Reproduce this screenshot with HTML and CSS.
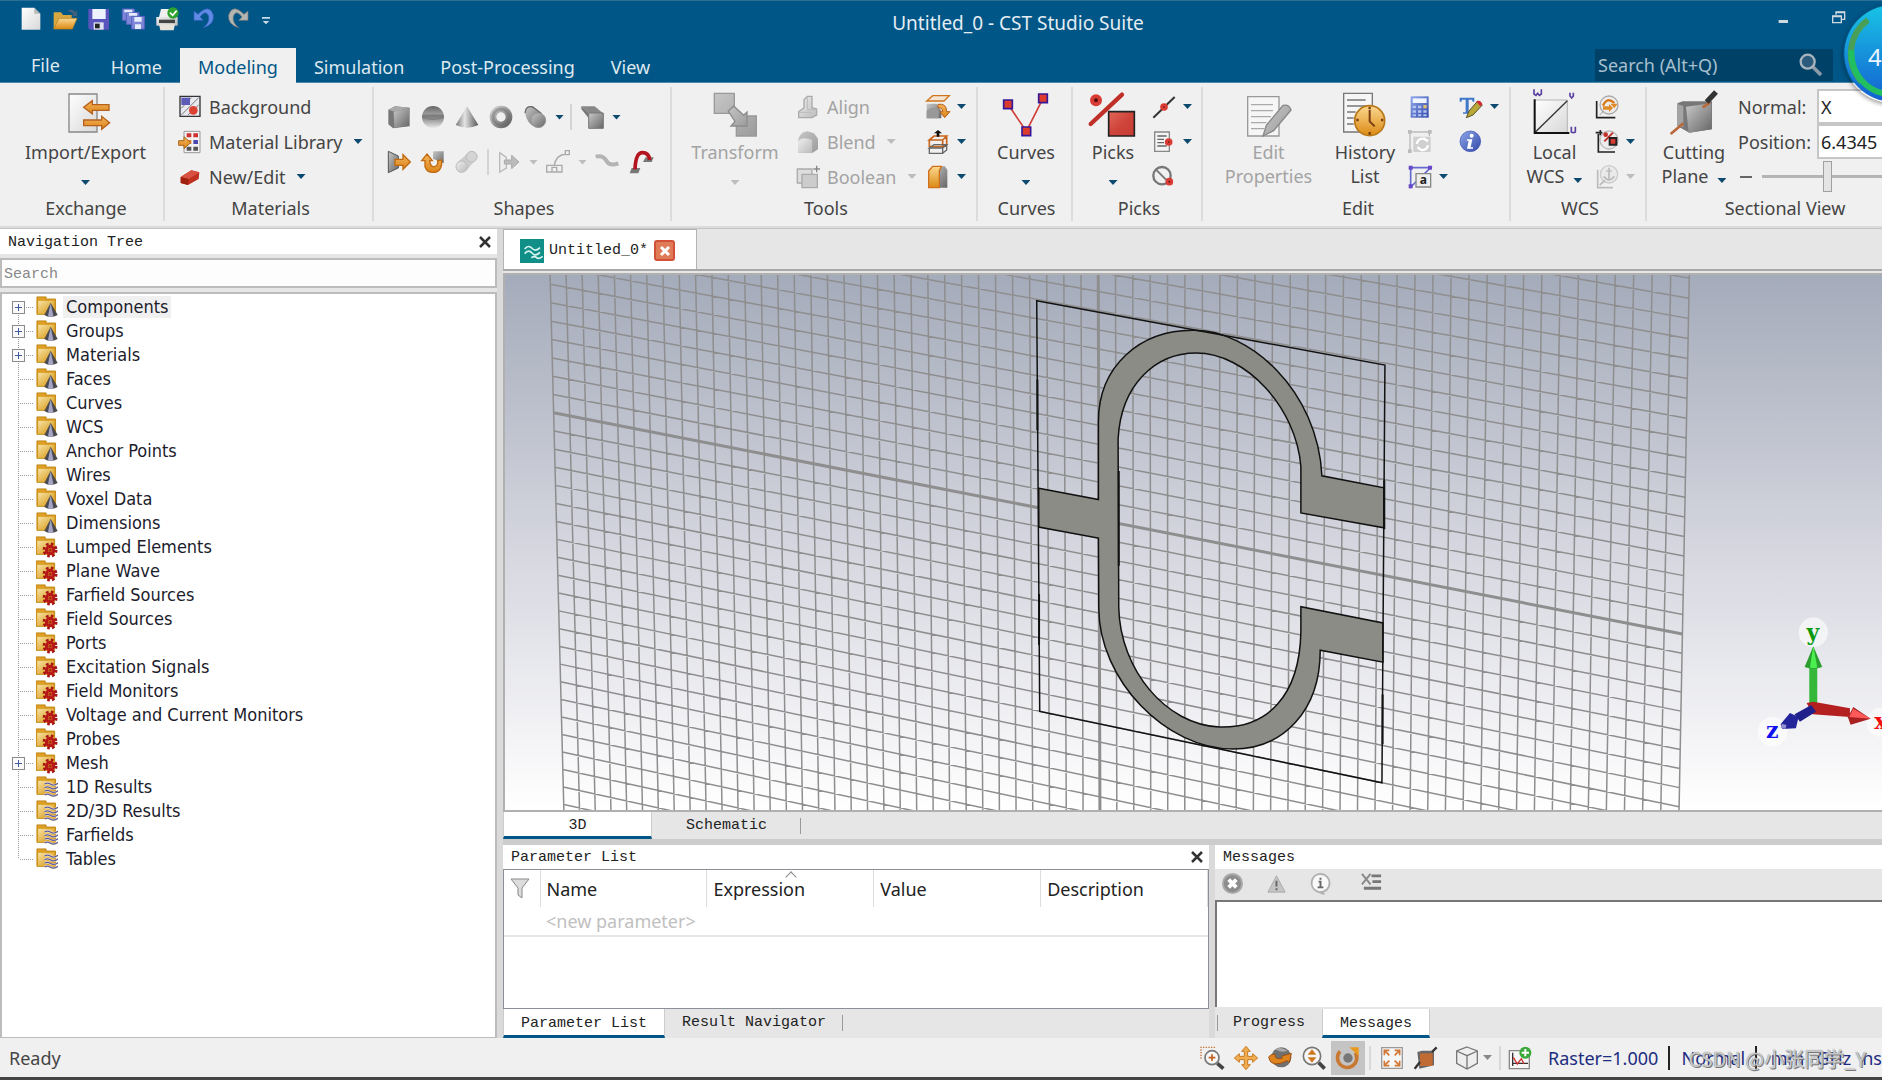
FILE: index.html
```html
<!DOCTYPE html>
<html lang="en">
<head>
<meta charset="utf-8">
<title>Untitled_0 - CST Studio Suite</title>
<link rel="stylesheet" href="styles.css">
</head>
<body>
<svg class="defs" aria-hidden="true">
  <defs>
    <linearGradient id="gray" x1="0" y1="0" x2="1" y2="1"><stop offset="0" stop-color="#c8c8c8"/><stop offset="1" stop-color="#666"/></linearGradient>
    <linearGradient id="steel" x1="0" y1="0" x2="1" y2="0"><stop offset="0" stop-color="#777"/><stop offset=".4" stop-color="#e4e4e4"/><stop offset="1" stop-color="#555"/></linearGradient>
    <linearGradient id="pale" x1="0" y1="0" x2="1" y2="1"><stop offset="0" stop-color="#eee"/><stop offset="1" stop-color="#bbb"/></linearGradient>
    <linearGradient id="mid" x1="0" y1="0" x2="1" y2="1"><stop offset="0" stop-color="#c6c6c6"/><stop offset="1" stop-color="#9c9c9c"/></linearGradient>
    <linearGradient id="gold" x1="0" y1="0" x2="0" y2="1"><stop offset="0" stop-color="#fbd890"/><stop offset="1" stop-color="#dc8a14"/></linearGradient>
    <linearGradient id="arrow" x1="0" y1="0" x2="0" y2="1"><stop offset="0" stop-color="#f4b45c"/><stop offset="1" stop-color="#dc8418"/></linearGradient>
    <linearGradient id="folder" x1="0" y1="0" x2="1" y2="1"><stop offset="0" stop-color="#f5e2a4"/><stop offset="1" stop-color="#d8940c"/></linearGradient>
    <linearGradient id="red" x1="0" y1="0" x2="1" y2="1"><stop offset="0" stop-color="#e2675a"/><stop offset=".5" stop-color="#d0453b"/><stop offset="1" stop-color="#c53a32"/></linearGradient>
    <linearGradient id="blue" x1="0" y1="0" x2="1" y2="1"><stop offset="0" stop-color="#8fa8ea"/><stop offset="1" stop-color="#3048a8"/></linearGradient>
    <linearGradient id="paper" x1="0" y1="0" x2="1" y2="1"><stop offset="0" stop-color="#fff"/><stop offset="1" stop-color="#d8d8d8"/></linearGradient>
    <linearGradient id="ball" x1="0" y1="0" x2="0" y2="1"><stop offset="0" stop-color="#666"/><stop offset=".35" stop-color="#999"/><stop offset=".45" stop-color="#777"/><stop offset="1" stop-color="#e8e8e8"/></linearGradient>
    <symbol id="folder-base" viewBox="0 0 72 72">
      <path d="M3 8V3h30v7h31v50H3z" fill="#dca024" stroke="#c08410" stroke-width="3"/>
      <path d="M7 16h52v42H7z" fill="url(#folder)"/>
    </symbol>
    <symbol id="f-cone" viewBox="0 0 72 72">
      <use href="#folder-base"/>
      <path d="M48 22L27 62q20 12 44 0z" fill="#4a4a50"/><path d="M48 24l-9 42q9 3 18 0z" fill="#a4a6c4"/>
    </symbol>
    <symbol id="f-gear" viewBox="0 0 72 72">
      <use href="#folder-base" x="-3"/>
      <circle cx="46" cy="46" r="20" fill="none" stroke="#a81414" stroke-width="9" stroke-dasharray="8.500 7.208"/>
      <circle cx="46" cy="46" r="12" fill="#e0a52a" stroke="#b81818" stroke-width="10"/><path d="M46 40v12M40 46h12" stroke="#a81414" stroke-width="4"/>
    </symbol>
    <symbol id="f-wave" viewBox="0 0 72 72">
      <use href="#folder-base"/>
      <path d="M28 26q10-6 20 1t24-3M28 38q10-6 20 1t24-3M28 50q10-6 20 1t24-3M28 62q10-6 20 1t24-3" fill="none" stroke="#fff0c4" stroke-width="7"/>
      <path d="M28 26q10-6 20 1t24-3M28 38q10-6 20 1t24-3M28 50q10-6 20 1t24-3M28 62q10-6 20 1t24-3" fill="none" stroke="#5a58a4" stroke-width="4"/>
    </symbol>
  </defs>
</svg>

<header class="titlebar">
  <div class="quick">
    <button aria-label="New"><svg class="ic" viewBox="0 0 72 72"><path d="M8 2h38l18 18v48H8z" fill="url(#paper)"/><path d="M46 2v18h18z" fill="#b8b8b8"/></svg></button>
    <button aria-label="Open"><svg class="ic" viewBox="0 0 72 72"><path d="M2 66V16h22l6 8h26v10H18z" fill="#d8a740"/><path d="M2 66l16-32h54L58 66z" fill="url(#gold)" stroke="#c48a1c" stroke-width="2"/><path d="M42 14q12-14 26 2l4-6v18H56l6-6q-8-10-20-8z" fill="#44607a"/></svg></button>
    <button aria-label="Save"><svg class="ic" viewBox="0 0 72 72"><path d="M4 6h62v62H8l-4-6z" fill="#5a55bd"/><path d="M16 6h40v30H16z" fill="#eef2fc"/><path d="M20 46h30v22H20z" fill="#dfe2ee"/><path d="M24 50h14v14H24z" fill="#222"/></svg></button>
    <button aria-label="Save all"><svg class="ic" viewBox="0 0 72 72"><g stroke="#5a62c0" stroke-width="3" fill="#7e86d8"><path d="M4 6h36v34H4z"/><path d="M16 16h38v36H16z"/><path d="M32 28h38v38H32z"/></g><path d="M10 8h24v8H10zM24 18h24v8H24zM40 30h22v14H40zM42 52h18v14H42z" fill="#e4ebfa"/></svg></button>
    <button aria-label="Print"><svg class="ic" viewBox="0 0 72 72"><path d="M18 6h36v24H12z" fill="#f0f0f0"/><path d="M4 30h64v26H4z" fill="url(#pale)"/><path d="M12 38h48v10H12z" fill="#444"/><path d="M12 52h48l-4 18H16z" fill="#e8e4dc"/><circle cx="54" cy="18" r="17" fill="#2fa32f"/><path d="M45 17l8 8 12-14" fill="none" stroke="#fff" stroke-width="5"/></svg></button>
    <button class="undo" aria-label="Undo"><svg class="ic" viewBox="0 0 72 72"><path d="M6 12v28h28L24 30Q42 6 50 28q4 20-16 34 34-10 30-38Q52-12 18 22z" fill="#5f8ae6" stroke="#3561bd" stroke-width="2"/></svg></button>
    <button aria-label="Redo"><svg class="ic" viewBox="0 0 72 72"><path d="M66 12v28H38l10-10Q30 6 22 28q-4 20 16 34Q4 52 8 24 20-12 54 22z" fill="#b4b4b0" stroke="#777" stroke-width="2"/></svg></button>
    <button aria-label="Customize"><svg class="ic" viewBox="0 0 72 72"><path d="M6 30h24v5H6zM8 42h20L18 52z" fill="#c8dce8"/></svg></button>
  </div>
  <h1>Untitled_0 - CST Studio Suite</h1>
  <div class="wincontrols">
    <button aria-label="Minimize"><svg class="ic" viewBox="0 0 72 72"><path d="M20 30h28v9H20z" fill="#d0d8e0"/></svg></button>
    <button aria-label="Restore"><svg class="ic" viewBox="0 0 72 72"><path d="M30 14V6h26v22h-8M20 18h26v20H20z" fill="none" stroke="#d0d8e0" stroke-width="4"/><path d="M20 17h26v5H20zM30 5h26v5H30z" fill="#d0d8e0"/></svg></button>
  </div>
</header>
<nav class="tabs">
  <a class="file" href="#file">File</a><a href="#home">Home</a><a class="on" href="#modeling">Modeling</a><a href="#sim">Simulation</a><a href="#post">Post-Processing</a><a href="#view">View</a>
  <label class="find"><input type="text" placeholder="Search (Alt+Q)" aria-label="Search commands"><svg class="ic" viewBox="0 0 72 72"><path d="M42 42l24 24" stroke="#8a9aa8" stroke-width="11"/><circle cx="26" cy="26" r="21" fill="#2c5a7c" stroke="#a8b4be" stroke-width="7"/></svg></label>
</nav>
<div class="badge" aria-hidden="true"><svg viewBox="0 0 150 150"><defs><linearGradient id="bd" x1="0" y1="0" x2="0" y2="1"><stop offset="0" stop-color="#18c4e6"/><stop offset="1" stop-color="#1460d0"/></linearGradient></defs><circle cx="75" cy="75" r="73" fill="url(#bd)"/><path d="M38 24A64 64 0 0 0 28 118" fill="none" stroke="#4a9f58" stroke-width="9"/><path d="M13 70A62 62 0 0 0 90 135" fill="none" stroke="#22bf60" stroke-width="9"/></svg><span>4</span></div>

<section class="ribbon">
  <div class="group exchange">
    <div class="body">
      <button class="big"><svg class="lg" viewBox="-12 0 144 132"><path d="M12 6h84v114H12z" fill="url(#paper)" stroke="#888" stroke-width="4"/><path d="M56 46l26-20v12h50v17H82v11z" fill="url(#arrow)" stroke="#b5601c" stroke-width="4"/><path d="M134 92l-24-19v11H56v17h54v11z" fill="url(#arrow)" stroke="#b5601c" stroke-width="4"/></svg><span>Import/Export</span><i class="dd"></i></button>
    </div><h2>Exchange</h2>
  </div>
  <div class="group materials">
    <div class="body"><div class="rows">
      <button class="sm"><svg class="ic" viewBox="0 0 72 72"><path d="M6 4h60v60H6z" fill="#e8e8f0" stroke="#333" stroke-width="4"/><path d="M10 60L62 8M30 60L62 30M10 40L40 8" stroke="#777" stroke-width="3"/><path d="M10 8h26v22H10z" fill="#5c5cb8"/><circle cx="46" cy="46" r="13" fill="#dc4030"/></svg>Background</button>
      <button class="sm"><svg class="ic" viewBox="0 0 72 72"><path d="M18 4h48v64H18z" fill="#f2f2f2" stroke="#999" stroke-width="3"/><path d="M26 10h14v12H26zM46 10h14v12H46z" fill="#d03030"/><path d="M26 30h14v12H26z" fill="#e08020"/><path d="M46 30h14v12H46z" fill="#4848b0"/><path d="M26 50h14v12H26zM46 50h14v12H46z" fill="#555"/><path d="M2 32h16V20l20 18-20 18V46H2z" fill="url(#arrow)" stroke="#a8681c" stroke-width="3"/></svg>Material Library<i class="dd"></i></button>
      <button class="sm"><svg class="ic" viewBox="0 0 72 72"><path d="M8 36L40 16l24 6-2 20-32 18-22-6z" fill="#c03020"/><path d="M8 36L40 16l24 6-32 20z" fill="#d85040"/><path d="M32 42l-2 18-22-6V36z" fill="#a02010"/></svg>New/Edit<i class="dd"></i></button>
    </div></div><h2>Materials</h2>
  </div>
  <div class="group shapes">
    <div class="body"><div class="strips">
      <div class="strip">
        <button aria-label="Brick"><svg class="ic" viewBox="0 0 72 72"><path d="M4 14L24 4l44 4v56L18 70 4 58z" fill="#777"/><path d="M20 20l46-10v52l-44 6z" fill="url(#gray)"/><path d="M4 14L24 4l44 4-46 12z" fill="#aaa"/></svg></button>
        <button aria-label="Sphere"><svg class="ic" viewBox="0 0 72 72"><circle cx="36" cy="36" r="33" fill="url(#ball)"/><path d="M4 36q32 14 64 0" fill="none" stroke="#777" stroke-width="3"/></svg></button>
        <button aria-label="Cone"><svg class="ic" viewBox="0 0 72 72"><path d="M36 4L2 60q34 16 68 0z" fill="url(#steel)"/></svg></button>
        <button aria-label="Torus"><svg class="ic" viewBox="0 0 72 72"><circle cx="36" cy="36" r="24" fill="none" stroke="url(#gray)" stroke-width="20"/><circle cx="36" cy="36" r="24" fill="none" stroke="#666" stroke-opacity=".4" stroke-width="8"/></svg></button>
        <button aria-label="Cylinder"><svg class="ic" viewBox="0 0 72 72"><path d="M6 24Q8 0 30 6l26 20-20 40Q12 56 6 24z" fill="url(#gray)"/><path d="M6 24Q8 0 30 6l26 20" fill="none" stroke="#666" stroke-width="4"/><circle cx="46" cy="46" r="22" fill="url(#gray)" stroke="#999" stroke-width="3"/></svg></button>
        <i class="dd"></i><i class="bar"></i>
        <button aria-label="Face extrude"><svg class="ic" viewBox="0 0 72 72"><path d="M4 4h40l24 20H26z" fill="#888"/><path d="M4 4l22 20v16L4 12z" fill="#777"/><path d="M26 24h44v46H26z" fill="url(#gray)" stroke="#777" stroke-width="3"/></svg></button>
        <i class="dd"></i>
      </div>
      <div class="strip">
        <button aria-label="Extrude"><svg class="ic" viewBox="0 0 72 72"><path d="M4 4l30 14v36L4 68z" fill="url(#gray)" stroke="#555" stroke-width="3"/><path d="M24 28h24V14l22 22-22 22V46H24z" fill="url(#arrow)" stroke="#c06a10" stroke-width="4"/></svg></button>
        <button aria-label="Rotate"><svg class="ic" viewBox="0 0 72 72"><path d="M36 4h32v36L36 26z" fill="url(#gray)"/><path d="M2 32L18 12l16 20h-8q2 20 14 18 12-2 10-18l12-2q2 30-16 36-26 6-34-16V32z" fill="url(#arrow)" stroke="#c06a10" stroke-width="4"/></svg></button>
        <button aria-label="Loft" disabled><svg class="ic" viewBox="0 0 72 72"><path d="M6 38L42 6q22-6 26 16L34 62z" fill="#ccc"/><circle cx="20" cy="50" r="17" fill="url(#pale)" stroke="#bbb" stroke-width="3"/><circle cx="50" cy="20" r="16" fill="#d4d4d4" stroke="#bbb" stroke-width="3"/></svg></button>
        <i class="bar"></i>
        <button aria-label="Shell" disabled><svg class="ic" viewBox="0 0 72 72"><path d="M8 8l20 14v32L8 66z" fill="#eee" stroke="#bbb" stroke-width="4"/><path d="M22 30h22V16l22 20-22 20V42H22z" fill="#bbb" stroke="#aaa" stroke-width="3"/></svg></button>
        <i class="dd off"></i>
        <button aria-label="Bend" disabled><svg class="ic" viewBox="0 0 72 72"><path d="M2 46h46v20H2zM18 52h14v14H18zM24 48Q30 14 60 12M58 2h12v12H58z" fill="none" stroke="#aaa" stroke-width="4"/></svg></button>
        <i class="dd off"></i>
        <button aria-label="Sweep" disabled><svg class="ic" viewBox="0 0 72 72"><path d="M2 20q22-6 32 12t36 8" fill="none" stroke="#b4b4b4" stroke-width="12"/></svg></button>
        <button aria-label="Bond wire"><svg class="ic" viewBox="0 0 72 72"><path d="M8 54h26l-6 16H2zM50 22h24l-6 14H42z" fill="#777"/><path d="M18 58Q20 8 40 8t22 22" fill="none" stroke="#b41420" stroke-width="11"/></svg></button>
      </div>
    </div></div><h2>Shapes</h2>
  </div>
  <div class="group tools">
    <div class="body">
      <button class="big" disabled><svg class="lg" viewBox="0 0 144 132"><path d="M10 4h60v60H10zM76 72h60v60H76z" fill="url(#mid)" stroke="#999" stroke-width="4"/><path d="M52 58l16-16 30 28 10-10v42H60l12-14z" fill="url(#mid)" stroke="#8c8c8c" stroke-width="4"/></svg><span>Transform</span><i class="dd off"></i></button>
      <div class="rows">
        <button class="sm" disabled><svg class="ic" viewBox="0 0 72 72"><path d="M8 50l16-12V14L34 4h14v34l14 4v18l-14 8H8z" fill="url(#pale)" stroke="#aaa" stroke-width="4"/><path d="M34 4v40h28M8 52h40" fill="none" stroke="#bbb" stroke-width="3"/></svg>Align</button>
        <button class="sm" disabled><svg class="ic" viewBox="0 0 72 72"><path d="M6 34Q8 8 34 4l20 6 12 16v32L50 68H6z" fill="url(#mid)"/><path d="M6 34Q20 18 48 30v38H6z" fill="url(#pale)"/></svg>Blend<i class="dd off"></i></button>
        <button class="sm" disabled><svg class="ic" viewBox="0 0 72 72"><path d="M4 12h44v42H4z" fill="#ddd" stroke="#aaa" stroke-width="4"/><path d="M18 28h46v40H18z" fill="#ccc" stroke="#aaa" stroke-width="4"/><path d="M52 12h20M62 2v20" stroke="#888" stroke-width="4"/></svg>Boolean<i class="dd off"></i></button>
      </div>
      <div class="rows icons">
        <button class="sm" aria-label="Bend shape"><svg class="ic" viewBox="0 0 72 72"><path d="M20 2h50L54 18H2z" fill="#f4e4d4" stroke="#d0741c" stroke-width="4"/><path d="M2 26h30l14 22v22H2z" fill="url(#gray)"/><path d="M2 48q18-20 36 0v22H2z" fill="#999"/><path d="M36 28q26-4 26 22h10L56 68 42 50h8q0-12-14-12z" fill="url(#arrow)" stroke="#b5601c" stroke-width="3"/></svg><i class="dd"></i></button>
        <button class="sm" aria-label="Shape tools"><svg class="ic" viewBox="0 0 72 72"><path d="M10 30l14-12h38L50 30zM10 30v20h40V30M62 18v26L50 50" fill="none" stroke="#c8641c" stroke-width="5"/><path d="M10 54l14-10h38L50 54zM10 54v16h40V54M62 44v16L50 70" fill="none" stroke="#666" stroke-width="4"/><path d="M36 0L24 10h8v10h8V10h8z" fill="#111"/></svg><i class="dd"></i></button>
        <button class="sm" aria-label="Slice"><svg class="ic" viewBox="0 0 72 72"><path d="M8 14L20 4h36l8 10v54H8z" fill="url(#gray)"/><path d="M8 18L20 4h26L40 18v50H8z" fill="url(#gold)" stroke="#d0701c" stroke-width="4"/></svg><i class="dd"></i></button>
      </div>
    </div><h2>Tools</h2>
  </div>
  <div class="group curves">
    <div class="body">
      <button class="big"><svg class="lg" viewBox="0 0 144 132"><path d="M18 37L73 118 123 19" fill="none" stroke="#d04038" stroke-width="5"/><path d="M5 24h26v26H5zM60 105h26v26H60zM110 6h26v26h-26z" fill="#dc3c2c" stroke="#35189a" stroke-width="5"/></svg><span>Curves</span><i class="dd"></i></button>
    </div><h2>Curves</h2>
  </div>
  <div class="group picks">
    <div class="body">
      <button class="big"><svg class="lg" viewBox="0 0 144 132"><path d="M5 96L99 8" stroke="#c03028" stroke-width="13" stroke-linecap="round"/><circle cx="21" cy="25" r="12" fill="#501010" stroke="#d83c34" stroke-width="12"/><path d="M59 59h77v73H59z" fill="url(#red)" stroke="#222" stroke-width="5"/></svg><span>Picks</span><i class="dd"></i></button>
      <div class="rows icons">
        <button class="sm" aria-label="Pick point"><svg class="ic" viewBox="0 0 72 72"><path d="M4 68L68 6" stroke="#333" stroke-width="6"/><circle cx="36" cy="36" r="7" fill="#601010" stroke="#d83c34" stroke-width="9"/></svg><i class="dd"></i></button>
        <button class="sm" aria-label="Pick lists"><svg class="ic" viewBox="0 0 72 72"><path d="M8 6h44v58H8z" fill="#f4f4f4" stroke="#888" stroke-width="4"/><path d="M16 18h28M16 28h20M16 38h20M16 48h28" stroke="#666" stroke-width="4"/><circle cx="50" cy="36" r="7" fill="#601010" stroke="#d83c34" stroke-width="9"/></svg><i class="dd"></i></button>
        <button class="sm" aria-label="Clear picks"><svg class="ic" viewBox="0 0 72 72"><circle cx="30" cy="32" r="26" fill="#f0f0f0" stroke="#777" stroke-width="7"/><path d="M12 14l36 36" stroke="#777" stroke-width="6"/><circle cx="52" cy="50" r="7" fill="#601010" stroke="#d83c34" stroke-width="9"/></svg></button>
      </div>
    </div><h2>Picks</h2>
  </div>
  <div class="group edit">
    <div class="body">
      <button class="big props" disabled><svg class="lg" viewBox="0 0 144 132"><path d="M8 14h94v118H8z" fill="#f6f6f6" stroke="#999" stroke-width="4"/><path d="M18 38h66M18 56h66M18 74h60M18 92h46M18 110h40" stroke="#aaa" stroke-width="4"/><path d="M54 132l10-32 50-60q18-4 24 14L86 116z" fill="url(#mid)" stroke="#888" stroke-width="4"/></svg><span>Edit<br>Properties</span></button>
      <button class="big"><svg class="lg" viewBox="0 0 144 132"><path d="M8 4h86v116H8z" fill="#f6f6f6" stroke="#777" stroke-width="4"/><path d="M18 24h56M18 42h60M18 60h26M18 78h20M18 96h20" stroke="#777" stroke-width="4"/><circle cx="86" cy="86" r="45" fill="url(#gold)" stroke="#b87818" stroke-width="5"/><path d="M86 54v34l15 15" fill="none" stroke="#7a3c10" stroke-width="6"/><path d="M86 44v8M86 120v8M46 84h7M120 84h7" stroke="#7a3c10" stroke-width="7"/></svg><span>History<br>List</span></button>
      <div class="rows icons">
        <button class="sm" aria-label="Calculator"><svg class="ic" viewBox="0 0 72 72"><path d="M8 4h54v64H8z" fill="url(#blue)"/><path d="M14 10h42v14H14z" fill="#f0f4ff"/><path d="M14 32h10v8H14zM30 32h10v8H30zM14 46h10v7H14zM30 46h10v7H30zM46 46h10v7H46zM14 58h10v6H14zM30 58h10v6H30zM46 58h10v6H46z" fill="#b4c2f4"/><path d="M46 30h10v10H46z" fill="#e0c070"/></svg></button>
        <button class="sm" aria-label="Update" disabled><svg class="ic" viewBox="0 0 72 72"><path d="M6 6h60M6 6v60M64 6v12" fill="none" stroke="#bbb" stroke-width="4"/><path d="M0 0h11v11H0zM60 0h11v11H60zM0 58h11v11H0z" fill="#bbb"/><path d="M16 20h52v46H16z" fill="#d0d0d0"/><path d="M26 42q4-18 22-16l12 8M60 46q-4 16-20 14l-12-8" fill="none" stroke="#fff" stroke-width="7"/></svg></button>
        <button class="sm" aria-label="Rename"><svg class="ic" viewBox="0 0 72 72"><path d="M8 8h60L8 66z" fill="none" stroke="#666ad0" stroke-width="5"/><path d="M2 2h12v12H2zM60 2h12v12H60zM2 58h12v12H2z" fill="#6648c8"/><path d="M24 26h44v40H24z" fill="#eee" stroke="#888" stroke-width="4"/><text x="35" y="58" class="glyph-a">a</text></svg><i class="dd"></i></button>
      </div>
      <div class="rows icons">
        <button class="sm" aria-label="Text edit"><svg class="ic" viewBox="0 0 72 72"><path d="M2 20V8h44v12h-5l-2-6H29v38h8v4H12v-4h8V14H9l-2 6z" fill="#3f78c8"/><path d="M22 68l8-20 26-30 14 12-28 30z" fill="#b8a83a" stroke="#5a5228" stroke-width="3"/><path d="M52 20q12-8 18 8l-6 6z" fill="#d02838"/></svg><i class="dd"></i></button>
        <button class="sm" aria-label="Information"><svg class="ic" viewBox="0 0 72 72"><circle cx="34" cy="34" r="31" fill="url(#blue)" stroke="#3a4fb0" stroke-width="2"/><circle cx="38" cy="17" r="6" fill="#fff"/><path d="M24 28h16l-5 24h7v4H24l5-24h-6z" fill="#fff"/></svg></button>
      </div>
    </div><h2>Edit</h2>
  </div>
  <div class="group wcs">
    <div class="body">
      <button class="big"><svg class="lg" viewBox="5 0 144 132"><path d="M16 24h98v98H16z" fill="url(#paper)" stroke="#999" stroke-width="2"/><path d="M16 122L114 26" stroke="#333" stroke-width="4"/><path d="M16 22v101h104" fill="none" stroke="#111" stroke-width="6"/><path d="M14-8v14l6 4 5-6 5 6 6-4V-8M122 2v10l5 6 5-6V2M126 104v16q6 4 12 0v-16" fill="none" stroke="#5a40a0" stroke-width="5"/></svg><span>Local<br>WCS<i class="dd"></i></span></button>
      <div class="rows icons">
        <button class="sm" aria-label="Rotate WCS"><svg class="ic" viewBox="0 0 72 72"><circle cx="42" cy="30" r="27" fill="#ececec" stroke="#aaa" stroke-width="4"/><path d="M5 18v50h56" fill="none" stroke="#222" stroke-width="5"/><path d="M14 60l12-12" stroke="#999" stroke-width="3"/><path d="M24 32q12-28 34-8" fill="none" stroke="#d87818" stroke-width="7"/><path d="M46 26h22L58 40zM24 34h18v-7l12 12-12 12v-7H24z" fill="#e08a28"/></svg></button>
        <button class="sm" aria-label="Align WCS"><svg class="ic" viewBox="0 0 72 72"><circle cx="42" cy="30" r="27" fill="#ececec" stroke="#bbb" stroke-width="4"/><path d="M10 12v54h50M2 8h20M16 0v16" fill="none" stroke="#222" stroke-width="5"/><path d="M28 34L54 8" stroke="#c03028" stroke-width="6"/><circle cx="32" cy="14" r="7" fill="#c03028"/><path d="M44 24h20v20H44z" fill="#d83c34" stroke="#222" stroke-width="6"/></svg><i class="dd"></i></button>
        <button class="sm" aria-label="Fix WCS" disabled><svg class="ic" viewBox="0 0 72 72"><circle cx="42" cy="28" r="26" fill="#eaeaea" stroke="#ccc" stroke-width="4"/><path d="M8 14v54h46M14 60l16-14" fill="none" stroke="#bbb" stroke-width="5"/><path d="M42 8v38M26 34q16 22 32 0M34 18h16" fill="none" stroke="#bbb" stroke-width="5"/></svg><i class="dd off"></i></button>
      </div>
    </div><h2>WCS</h2>
  </div>
  <div class="group section">
    <div class="body">
      <button class="big"><svg class="lg" viewBox="0 0 144 132"><path d="M22 34l16-6h88v84l-68 10-36-20z" fill="#777"/><path d="M22 36l18 6v64l-18-6z" fill="#a4a4a4"/><path d="M48 44l76-10v78l-68 10z" fill="url(#gray)"/><path d="M2 126L40 94M98 46l22-14" stroke="#b8683a" stroke-width="8"/><path d="M110 30L138 0" stroke="#333" stroke-width="16"/></svg><span>Cutting<br>Plane<i class="dd"></i></span></button>
      <form class="plane">
        <label for="normal">Normal:</label><select id="normal"><option>X</option></select>
        <label for="pos">Position:</label><input id="pos" type="text" value="6.4345">
        <div class="slide"><span class="minus"></span><input type="range" min="0" max="100" value="38" aria-label="Plane position"></div>
      </form>
    </div><h2>Sectional View</h2>
  </div>
</section>

<main class="work">
  <aside class="navtree">
    <div class="dockhead"><h3>Navigation Tree</h3><button aria-label="Close navigation tree"><svg class="x" viewBox="0 0 12 12"><path d="M1 1l10 10M11 1L1 11"/></svg></button></div>
    <input class="treesearch" type="text" placeholder="Search" aria-label="Search tree">
    <ul class="tree">
      <li><span class="tw"><b class="plus"></b></span><svg class="ic"><use href="#f-cone"/></svg><a class="sel" href="#t">Components</a></li>
      <li><span class="tw"><b class="plus"></b></span><svg class="ic"><use href="#f-cone"/></svg><a href="#t">Groups</a></li>
      <li><span class="tw"><b class="plus"></b></span><svg class="ic"><use href="#f-cone"/></svg><a href="#t">Materials</a></li>
      <li><span class="tw"></span><svg class="ic"><use href="#f-cone"/></svg><a href="#t">Faces</a></li>
      <li><span class="tw"></span><svg class="ic"><use href="#f-cone"/></svg><a href="#t">Curves</a></li>
      <li><span class="tw"></span><svg class="ic"><use href="#f-cone"/></svg><a href="#t">WCS</a></li>
      <li><span class="tw"></span><svg class="ic"><use href="#f-cone"/></svg><a href="#t">Anchor Points</a></li>
      <li><span class="tw"></span><svg class="ic"><use href="#f-cone"/></svg><a href="#t">Wires</a></li>
      <li><span class="tw"></span><svg class="ic"><use href="#f-cone"/></svg><a href="#t">Voxel Data</a></li>
      <li><span class="tw"></span><svg class="ic"><use href="#f-cone"/></svg><a href="#t">Dimensions</a></li>
      <li><span class="tw"></span><svg class="ic"><use href="#f-gear"/></svg><a href="#t">Lumped Elements</a></li>
      <li><span class="tw"></span><svg class="ic"><use href="#f-gear"/></svg><a href="#t">Plane Wave</a></li>
      <li><span class="tw"></span><svg class="ic"><use href="#f-gear"/></svg><a href="#t">Farfield Sources</a></li>
      <li><span class="tw"></span><svg class="ic"><use href="#f-gear"/></svg><a href="#t">Field Sources</a></li>
      <li><span class="tw"></span><svg class="ic"><use href="#f-gear"/></svg><a href="#t">Ports</a></li>
      <li><span class="tw"></span><svg class="ic"><use href="#f-gear"/></svg><a href="#t">Excitation Signals</a></li>
      <li><span class="tw"></span><svg class="ic"><use href="#f-gear"/></svg><a href="#t">Field Monitors</a></li>
      <li><span class="tw"></span><svg class="ic"><use href="#f-gear"/></svg><a href="#t">Voltage and Current Monitors</a></li>
      <li><span class="tw"></span><svg class="ic"><use href="#f-gear"/></svg><a href="#t">Probes</a></li>
      <li><span class="tw"><b class="plus"></b></span><svg class="ic"><use href="#f-gear"/></svg><a href="#t">Mesh</a></li>
      <li><span class="tw"></span><svg class="ic"><use href="#f-wave"/></svg><a href="#t">1D Results</a></li>
      <li><span class="tw"></span><svg class="ic"><use href="#f-wave"/></svg><a href="#t">2D/3D Results</a></li>
      <li><span class="tw"></span><svg class="ic"><use href="#f-wave"/></svg><a href="#t">Farfields</a></li>
      <li><span class="tw"></span><svg class="ic"><use href="#f-wave"/></svg><a href="#t">Tables</a></li>
    </ul>
  </aside>

  <div class="center">
    <div class="doctabs"><div class="doctab"><svg class="ic" viewBox="0 0 72 72"><path d="M0 0h72v72H0z" fill="#0f8f88"/><path d="M14 30q12-14 22-2t24-2M14 44q12-14 22-2t24-2M34 56q10-6 16 0t18-4" fill="none" stroke="#d8f4f0" stroke-width="5"/></svg><span>Untitled_0*</span><button aria-label="Close document"><svg class="x" viewBox="0 0 12 12"><path d="M2 2l8 8M10 2L2 10"/></svg></button></div></div>
    <div class="viewport">
      <svg id="scene" viewBox="506 275 1376 535" preserveAspectRatio="xMinYMin slice" role="img" aria-label="3D model view">
        <path id="grid" class="grid"/>
        <path id="axes" class="axes"/>
        <g transform="translate(1000 270) scale(.3333 .3444)" class="model">
          <path class="solid" d="M118 633L297 666V440C297 280 420 175 580 175C750 172 955 350 967 597L1153 632V748L904 705V570C890 400 740 241 590 241C470 241 365 330 356 490L358 980C362 1160 500 1320 660 1326C800 1330 900 1240 904 1050V977L1150 1024V1138L962 1103C962 1280 850 1390 700 1390C500 1390 298 1190 298 980L297 778 118 746z"/>
          <path class="box" d="M112 89L1156 276 1147 1488 121 1281z"/>
          <path class="heavy" d="M114 318V465M358 583V858M1154 610V752M119 940V1088M1149 1232V1376"/>
        </g>
        <g transform="translate(1640 580) scale(.3333)">
          <circle cx="520" cy="156" r="44" class="halo"/><circle cx="398" cy="454" r="44" class="halo"/><circle cx="724" cy="426" r="44" class="halo"/>
          <path d="M508 255h24v115h-24z" fill="#35b83a"/><path d="M520 198L494 260q26 10 53 0z" fill="#2c9e30"/><path d="M520 198l-10 64q10 3 22 0z" fill="#4af050"/>
          <path d="M500 368l20-4 110 20v26l-112-8z" fill="#b42020"/><path d="M640 380l52 35-60 18-8-22z" fill="#a82020"/><path d="M640 385l52 30-64-5z" fill="#ff5a5a"/>
          <path d="M514 374l14 20-48 30-16-22z" fill="#20208a"/><path d="M450 398l26 12-8 34-40 2-6-14z" fill="#24249a"/><path d="M426 430l14 4-4 12-14-4z" fill="#9090d0"/>
          <text x="500" y="180" class="axis ay">y</text><text x="378" y="474" class="axis az">z</text><text x="703" y="447" class="axis ax">x</text>
        </g>
      </svg>
    </div>
    <div class="viewtabs strip-tabs"><button class="on">3D</button><button>Schematic</button></div>

    <div class="docks">
      <section class="params">
        <div class="dockhead"><h3>Parameter List</h3><button aria-label="Close parameter list"><svg class="x" viewBox="0 0 12 12"><path d="M1 1l10 10M11 1L1 11"/></svg></button></div>
        <div class="tablebox">
          <table>
            <thead><tr><th class="filter"><svg viewBox="0 0 20 22"><path d="M1 1h18l-7 9v10l-4-3v-7z" fill="#ddd" stroke="#888"/></svg></th><th>Name</th><th class="sorted">Expression</th><th>Value</th><th>Description</th></tr></thead>
            <tbody><tr><td></td><td colspan="4">&lt;new parameter&gt;</td></tr></tbody>
          </table>
        </div>
        <div class="strip-tabs"><button class="on">Parameter List</button><button>Result Navigator</button></div>
      </section>
      <section class="messages">
        <div class="dockhead"><h3>Messages</h3></div>
        <div class="msgbar">
          <button aria-label="Errors"><svg viewBox="0 0 24 24"><circle cx="12" cy="12" r="10" fill="#8c8c8c" stroke="#aaa" stroke-width="2"/><path d="M8 8l8 8M16 8l-8 8" stroke="#fff" stroke-width="4"/></svg></button>
          <button aria-label="Warnings"><svg viewBox="0 0 24 24"><path d="M12 4L3 21h18z" fill="#c4c4c4" stroke="#aaa"/><path d="M12 9v6M12 17v2" stroke="#666" stroke-width="2"/></svg></button>
          <button aria-label="Information messages"><svg viewBox="0 0 24 24"><path d="M12 2a9.500 9.500 0 1 1 0 19l4 2-8-3A9.500 9.500 0 0 1 12 2z" fill="#f8f8f8" stroke="#b0b0b0" stroke-width="2"/><path d="M12 6v2M10 10h2v6M9 16h6" fill="none" stroke="#666" stroke-width="2"/></svg></button>
          <button class="clear" aria-label="Clear messages"><svg viewBox="0 0 24 24"><path d="M12 4h10M13 10h9M4 17h18" stroke="#777" stroke-width="3"/><path d="M2 2l9 11M11 2L2 13" stroke="#888" stroke-width="2"/></svg></button>
        </div>
        <div class="msgbox"></div>
        <div class="strip-tabs right"><button>Progress</button><button class="on">Messages</button></div>
      </section>
    </div>
  </div>
</main>

<footer class="status">
  <span class="ready">Ready</span>
  <div class="statusicons">
    <button aria-label="Zoom window"><svg class="ic" viewBox="0 0 72 72"><path d="M3 38V4h42" fill="none" stroke="#c87038" stroke-width="4" stroke-dasharray="4 4"/><path d="M52 52l18 16" stroke="#444" stroke-width="11"/><circle cx="36" cy="35" r="21" fill="#f6f6f6" stroke="#777" stroke-width="5"/><path d="M36 25v20M26 35h20" stroke="#c06020" stroke-width="5"/></svg></button>
    <button aria-label="Pan"><svg class="ic" viewBox="0 0 72 72"><path d="M36 1l13 15h-8v15h15v-8l15 13-15 13v-8H41v15h8L36 71 23 56h8V41H16v8L1 36l15-13v8h15V16h-8z" fill="#f0ac50" stroke="#c87a20" stroke-width="3"/></svg></button>
    <button aria-label="Rotate view"><svg class="ic" viewBox="0 0 72 72"><circle cx="40" cy="34" r="30" fill="#707070"/><path d="M22 10q16-10 36 4-18 8-36-4z" fill="#aaa"/><path d="M2 34q6-12 20-8-4 14 20 12v-8l28-8-6 28-6-6Q8 68 2 34z" fill="#dd8420" stroke="#a05010" stroke-width="3"/></svg></button>
    <button aria-label="Zoom"><svg class="ic" viewBox="0 0 72 72"><path d="M50 50l18 18" stroke="#444" stroke-width="11"/><circle cx="30" cy="30" r="26" fill="#f6f6f6" stroke="#777" stroke-width="5"/><path d="M30 10l13 16H17zM17 34h26L30 50z" fill="#d07820"/></svg></button>
    <button class="active" aria-label="Spin"><svg class="ic" viewBox="0 0 72 72"><circle cx="36" cy="36" r="14" fill="#777"/><path d="M12 16a29 29 0 1 0 46 4" fill="none" stroke="#c87830" stroke-width="11"/><path d="M40 4h28v26z" fill="#e89a20"/></svg></button>
    <i class="vsep"></i>
    <button aria-label="Fit"><svg class="ic" viewBox="0 0 72 72"><path d="M5 5h62v62H5z" fill="#f6f6f6" stroke="#999" stroke-width="4"/><path d="M13 28V13h15M44 13h15v15M59 44v15H44M28 59H13V44M13 13l15 15M59 13L44 28M59 59L44 44M13 59l15-15" fill="none" stroke="#d07838" stroke-width="5"/></svg></button>
    <button aria-label="Cutting plane"><svg class="ic" viewBox="0 0 72 72"><path d="M10 18l14-4h36v44l-44 10z" fill="#666"/><path d="M18 22h38v38H18z" fill="#c06a34"/><path d="M2 68l16-20M54 18L68 4" stroke="#333" stroke-width="7"/></svg></button>
    <button class="cube" aria-label="View cube"><svg class="ic" viewBox="0 0 72 72"><path d="M36 3l31 12v37L36 69 5 52V15zM5 15l31 14 31-14M36 29v40" fill="#eee" stroke="#777" stroke-width="4"/></svg><i class="dd gray"></i></button>
    <i class="vsep tight"></i>
    <button aria-label="Add result"><svg class="ic" viewBox="0 0 72 72"><path d="M4 14h60v54H4z" fill="#f6f6f6" stroke="#888" stroke-width="4"/><path d="M14 20v40M14 52h46" stroke="#333" stroke-width="4"/><path d="M16 34l12 20 12-16 8 16" fill="none" stroke="#d03030" stroke-width="4"/><circle cx="52" cy="20" r="18" fill="#3ca83c"/><path d="M52 9v22M41 20h22" stroke="#fff" stroke-width="6"/></svg></button>
  </div>
  <div class="info"><span>Raster=1.000</span><span>Normal</span><span>mm</span><span>GHz</span><span>ns</span></div>
  <div class="mark">CSDN @小张同学_Y</div>
</footer>
<script src="script.js"></script>
</body>
</html>
```
FILE: styles.css
```css
* { box-sizing: border-box; }
html, body { height: 100%; margin: 0; }
body {
  display: flex; flex-direction: column; overflow: hidden; position: relative;
  background: #f0f0f0; color: #444;
  font: 18px/24px "Noto Sans", sans-serif;
}
button { border: 0; padding: 0; margin: 0; background: none; font: inherit; color: inherit; }
h1, h2, h3, ul { margin: 0; padding: 0; font-weight: 400; }
input, select { font: inherit; border-radius: 0; outline: 0; }
a { color: inherit; text-decoration: none; }
.defs { position: absolute; width: 0; height: 0; }
.ic { width: 24px; height: 24px; flex: none; display: block; overflow: visible; }

/* title bar */
.titlebar { display: flex; flex: none; height: 48px; background: #005686; color: #e4edf3; border-top: 1px solid #2c7095; }
.quick { display: flex; align-items: flex-start; gap: 10px; padding: 6px 0 0 19px; width: 280px; flex: none; }
.quick .undo { margin-left: 3px; }
.titlebar h1 { flex: 1; text-align: center; font-size: 19px; line-height: 44px; }
.wincontrols { display: flex; gap: 30px; width: 126px; padding: 9px 0 0 16px; align-items: flex-start; }

.tabs { display: flex; flex: none; height: 35px; background: #005686; color: #dfe9f0; border-bottom: 1px solid #4a88a8; }
.tabs a { padding: 0 18px; line-height: 38px; height: 35px; }
.tabs .file { padding: 0 33px 0 31px; line-height: 34px; }
.tabs .on { background: #f0f0f0; color: #005686; }
.find { display: flex; align-items: center; width: 238px; height: 32px; margin: 1px 49px 0 auto; padding-right: 10px; background: #004267; }
.find input { flex: 1; min-width: 0; background: none; border: 0; padding: 0 3px; color: #a8bfce; }
.find input::placeholder { color: #a8bfce; opacity: 1; }

.badge { position: absolute; right: -60px; top: 4px; width: 99px; height: 99px; z-index: 3; border-radius: 50%; box-shadow: 0 2px 4px #0006; }
.badge svg { width: 100%; height: 100%; display: block; }
.badge span { position: absolute; left: 25px; top: 38px; color: #e8f4ff; font-size: 24px; line-height: 30px; }

/* ribbon */
.ribbon { display: flex; flex: none; height: 145px; padding: 4px 0 5px; overflow: hidden; border-bottom: 2px solid #dcdcdc; }
.group { display: flex; flex-direction: column; flex: none; border-right: 2px solid #dcdcdc; }
.group h2 { font-size: 18px; line-height: 24px; text-align: center; padding-left: 4px; }
.body { display: flex; height: 109px; padding-top: 2px; }
.big { display: flex; flex-direction: column; align-items: center; padding-top: 3px; line-height: 24px; }
.big .lg { width: 48px; height: 44px; margin-bottom: 4px; overflow: visible; }
.big:disabled, .sm:disabled { color: #a3a3a3; }
.rows { display: flex; flex-direction: column; }
.sm { display: flex; align-items: center; height: 35px; gap: 7px; white-space: nowrap; }
.dd { display: inline-block; flex: none; width: 9px; height: 5px; background: #0c4a70; clip-path: polygon(0 0, 100% 0, 50% 100%); }
.dd.off { background: #bdbdbd; }
.dd.gray { background: #888; }
.sm .dd { margin-left: 4px; }
.big > .dd { margin-top: 16px; }
.big span .dd { margin-left: 9px; }

.exchange { width: 165px; padding-left: 8px; }
.exchange .body { justify-content: center; }
.exchange h2 { padding-left: 1px; }
.materials { width: 209px; }
.materials .body { padding-left: 13px; }
.shapes { width: 298px; }
.shapes .body { padding-left: 13px; }
.strips { display: flex; flex-direction: column; gap: 19px; padding-top: 15px; }
.strip { display: flex; align-items: center; gap: 10px; }
.strip .dd { margin: 0 -2px; }
.bar { width: 2px; height: 26px; background: #d4d4d4; margin: 0 -2px; }
.tools { width: 306px; }
.tools .body { padding-left: 2px; }
.tools .big { width: 122px; }
.tools .rows { width: 130px; }
.rows.icons { width: auto; }
.rows.icons .dd { margin-left: 0; }
.curves { width: 95px; }
.curves .body { justify-content: center; padding-left: 3px; }
.picks { width: 130px; }
.picks .body { padding-left: 16px; gap: 15px; }
.edit { width: 308px; }
.edit .body { padding-left: 16px; }
.edit .big { width: 94px; }
.edit .big.props { width: 99px; }
.edit .big + .rows { margin-left: -4px; }
.edit .rows + .rows { margin-left: 11px; }
.edit .rows { width: 40px; }
.wcs { width: 136px; }
.wcs .body { padding-left: 15px; gap: 12px; }
.wcs .big { width: 57px; }
.section { flex: 1; border: 0; }
.section .body { padding-left: 13px; gap: 10px; }
.section .big { width: 68px; }
.section h2 { padding-left: 0; width: 276px; }
.glyph-a { font: bold 36px "Noto Sans", sans-serif; fill: #222; }

.plane { display: grid; grid-template-columns: 79px 1fr; grid-auto-rows: 35px; align-items: center; flex: 1; margin: 0; }
.plane select, .plane input[type=text] { width: 160px; height: 35px; border: 2px solid #c6c6c6; background: #fff; color: #222; padding: 0 2px; appearance: none; }
.slide { grid-column: 1 / 3; display: flex; align-items: center; gap: 10px; }
.minus { width: 12px; height: 2px; background: #666; margin-left: 2px; }
.slide input { appearance: none; width: 170px; height: 31px; margin: 0; background: linear-gradient(#b4b4b4, #b4b4b4) center / 100% 3px no-repeat; }
.slide input::-webkit-slider-thumb { appearance: none; width: 9px; height: 31px; background: #e4e4e4; border: 1px solid #a0a0a0; }

/* work area */
.work { flex: 1; display: grid; grid-template-columns: 497px minmax(0, 1fr); column-gap: 6px; min-height: 0; background: #dadada; border-top: 1px solid #c4c4c4; }
.dockhead { display: flex; align-items: center; justify-content: space-between; height: 24px; flex: none; background: #fff; padding: 0 6px 0 8px; }
.dockhead h3, .strip-tabs, .doctab, .treesearch { font: 15px/24px "Liberation Mono", monospace; color: #222; }
.dockhead h3 { padding-top: 2px; }
.x { width: 12px; height: 12px; display: block; fill: none; stroke: #333; stroke-width: 2.500; }
.navtree { display: flex; flex-direction: column; background: #e6e6e6; min-height: 0; }
.navtree .dockhead { height: 25px; }
.treesearch { height: 30px; margin: 4px 0; border: 2px solid #bcbcbc; padding: 2px 2px 0; background: #fdfdfd; }
.treesearch::placeholder { color: #888; opacity: 1; }
.tree { flex: 1; min-height: 0; overflow: hidden; list-style: none; background: #fff; border: 2px solid #bcbcbc; border-bottom-width: 1px; padding: 1px 0 0 10px; font: 18px/24px "DejaVu Sans Condensed", "DejaVu Sans", sans-serif; font-stretch: condensed; color: #1c1c2c; }
.tree li { display: flex; height: 24px; align-items: center; }
.tree .ic { width: 22px; height: 22px; margin-left: 1px; }
.tree a { margin-left: 5px; padding: 0 3px; line-height: 22px; }
.tree .sel { background: #f0f0f0; }
.tw { width: 23px; height: 24px; padding-top: 6px;
  background: repeating-linear-gradient(#999 0 1px, transparent 1px 2px) 6px 0 / 1px 100% no-repeat,
    repeating-linear-gradient(90deg, #999 0 1px, transparent 1px 2px) 8px 12px / 14px 1px no-repeat; }
.tree li:first-child .tw { background-position: 6px 12px, 8px 12px; }
.tree li:last-child .tw { background-size: 1px 12px, 14px 1px; }
.plus { display: block; width: 13px; height: 13px; border: 1px solid #8a8a8a;
  background: linear-gradient(#3c5a9c, #3c5a9c) center / 7px 1px no-repeat, linear-gradient(#3c5a9c, #3c5a9c) center / 1px 7px no-repeat, #fafafa; }

.center { display: flex; flex-direction: column; min-width: 0; min-height: 0; background: #e6e6e6; }
.doctabs { flex: none; height: 42px; border-bottom: 2px solid #a8a8a8; }
.doctab { display: flex; align-items: center; width: 194px; height: 40px; padding: 2px 0 0 16px; background: #fff; border: 1px solid #b4b4b4; border-bottom: 0; }
.doctab span { margin: 0 6px 0 5px; }
.doctab button { width: 21px; height: 21px; display: grid; place-items: center; background: #e07b58; border: 2px solid #d25038; border-radius: 3px; }
.doctab .x { stroke: #fff; stroke-width: 3; }
.viewport { flex: 1; min-height: 0; margin-top: 2px; border: solid #b0b0b0; border-width: 2px 0 2px 2px; background: linear-gradient(#a4abba, #d4d5de 50%, #fff); }
.viewport svg { display: block; width: 100%; height: 100%; }
.grid, .axes { fill: none; stroke: #8e8e8e; stroke-width: 1.500; }
.axes { stroke-width: 3; }
.model path { vector-effect: non-scaling-stroke; stroke: #111; stroke-width: 1.500; fill: none; }
.model .solid { fill: #8b8c85; }
.model .heavy { stroke-width: 2; }
.halo { fill: #fff; fill-opacity: .6; }
.axis { font: bold 66px "DejaVu Serif", serif; }
.ay { fill: #0a9a10; } .az { fill: #1010f0; } .ax { fill: #f01010; }

.strip-tabs { display: flex; flex: none; height: 29px; background: #e6e6e6; }
.strip-tabs button { padding: 0 17px; height: 27px; line-height: 26px; position: relative; }
.strip-tabs button:not(.on)::after { content: ""; position: absolute; right: 0; top: 6px; width: 1px; height: 16px; background: #999; }
.strip-tabs .on { background: #fff; height: 29px; line-height: 30px; border: 1px solid #ccc; border-width: 0 1px 3px; border-bottom-color: #005686; }
.strip-tabs.right button:not(.on)::after { right: auto; left: 1px; }
.strip-tabs.right { padding-left: 1px; }
.viewtabs { height: 27px; }
.viewtabs button { width: 149px; }
.viewtabs .on { height: 27px; line-height: 28px; }

.docks { display: grid; grid-template-columns: 706px minmax(0, 1fr); column-gap: 6px; flex: none; height: 199px; border-top: 6px solid #ccc; background: #dadada; }
.params, .messages { display: flex; flex-direction: column; background: #e6e6e6; }
.tablebox { flex: 1; background: #fff; border: 1px solid #8a8f98; }
table { width: 100%; border-collapse: collapse; table-layout: fixed; color: #222; }
th, td { text-align: left; font-weight: 400; padding: 0 6px; }
th { height: 37px; border-right: 1px solid #ddd; }
th.filter { width: 36px; padding: 0 0 0 6px; }
.filter svg { width: 20px; height: 22px; display: block; }
.sorted { position: relative; }
.sorted::before { content: ""; position: absolute; left: 80px; top: 3px; width: 7px; height: 7px; border: solid #888; border-width: 1px 0 0 1px; transform: rotate(45deg); }
td { height: 29px; border-bottom: 2px solid #e6e6e6; color: #c0c0c0; line-height: 20px; }
.msgbar { display: flex; align-items: flex-start; gap: 21px; height: 31px; padding: 3px 0 0 6px; }
.msgbar svg { width: 23px; height: 23px; display: block; }
.msgbar .clear { margin-left: 7px; }
.msgbox { flex: 1; background: #fff; border: solid #777; border-width: 2px 0 0 2px; margin-bottom: 2px; }

/* status bar */
.status { display: flex; align-items: center; flex: none; height: 42px; border-bottom: 3px solid #444; position: relative; }
.ready { padding: 0 9px; }
.statusicons { display: flex; align-items: center; gap: 10px; margin-left: auto; height: 34px; }
.active { background: #c4c4c4; width: 34px; height: 34px; margin: 0 -5px; display: grid; place-items: center; }
.vsep { width: 2px; height: 24px; background: #d8d8d8; margin: 0 -1px; }
.vsep.tight { margin: 0 -3px; }
.cube { display: flex; align-items: center; gap: 4px; margin-left: 7px; }
.info { display: flex; color: #1c2c80; width: 350px; padding-left: 16px; white-space: nowrap; }
.info span:nth-child(1) { width: 123px; border-right: 2px solid #222; }
.info span:nth-child(2) { width: 88px; padding-left: 12px; border-right: 2px solid #222; }
.info span:nth-child(3) { padding: 0 12px 0 14px; }
.info span:nth-child(4) { padding-right: 11px; }
.mark { position: absolute; right: 16px; top: 8px; color: #f4f4f4aa; font: 20px/26px "Noto Sans CJK SC", sans-serif; text-shadow: 1px 1px 0 #777, 0 0 1px #666; }
```
FILE: script.js
```js
// Perspective work plane: 33 cells to each side of the origin.
const N = 33;
const project = (a, b, c) => i => (a + b * i) / (1 + c * i);
const xTop = project(1098.8, 15.97, -0.001142);
const xBottom = project(1100.5, 15.57, -0.00117);
const yLeft = project(412.7, 18.646, 0.001067);
const yRight = project(633.7, 20.06, 0.0011);

const edge = (i, y) => xTop(i) + (xBottom(i) - xTop(i)) * (y - 274) / 535;
const column = i => `M${xTop(i)} 274L${xBottom(i)} 812`;
const row = j => {
  const l = yLeft(j), r = yRight(j);
  return `M${edge(-N, l)} ${l}L${edge(N, r)} ${r}`;
};

let lines = "";
for (let k = -N; k <= N; k++) if (k) lines += column(k) + row(k);
document.getElementById("grid").setAttribute("d", lines);
document.getElementById("axes").setAttribute("d", column(0) + row(0));
```
